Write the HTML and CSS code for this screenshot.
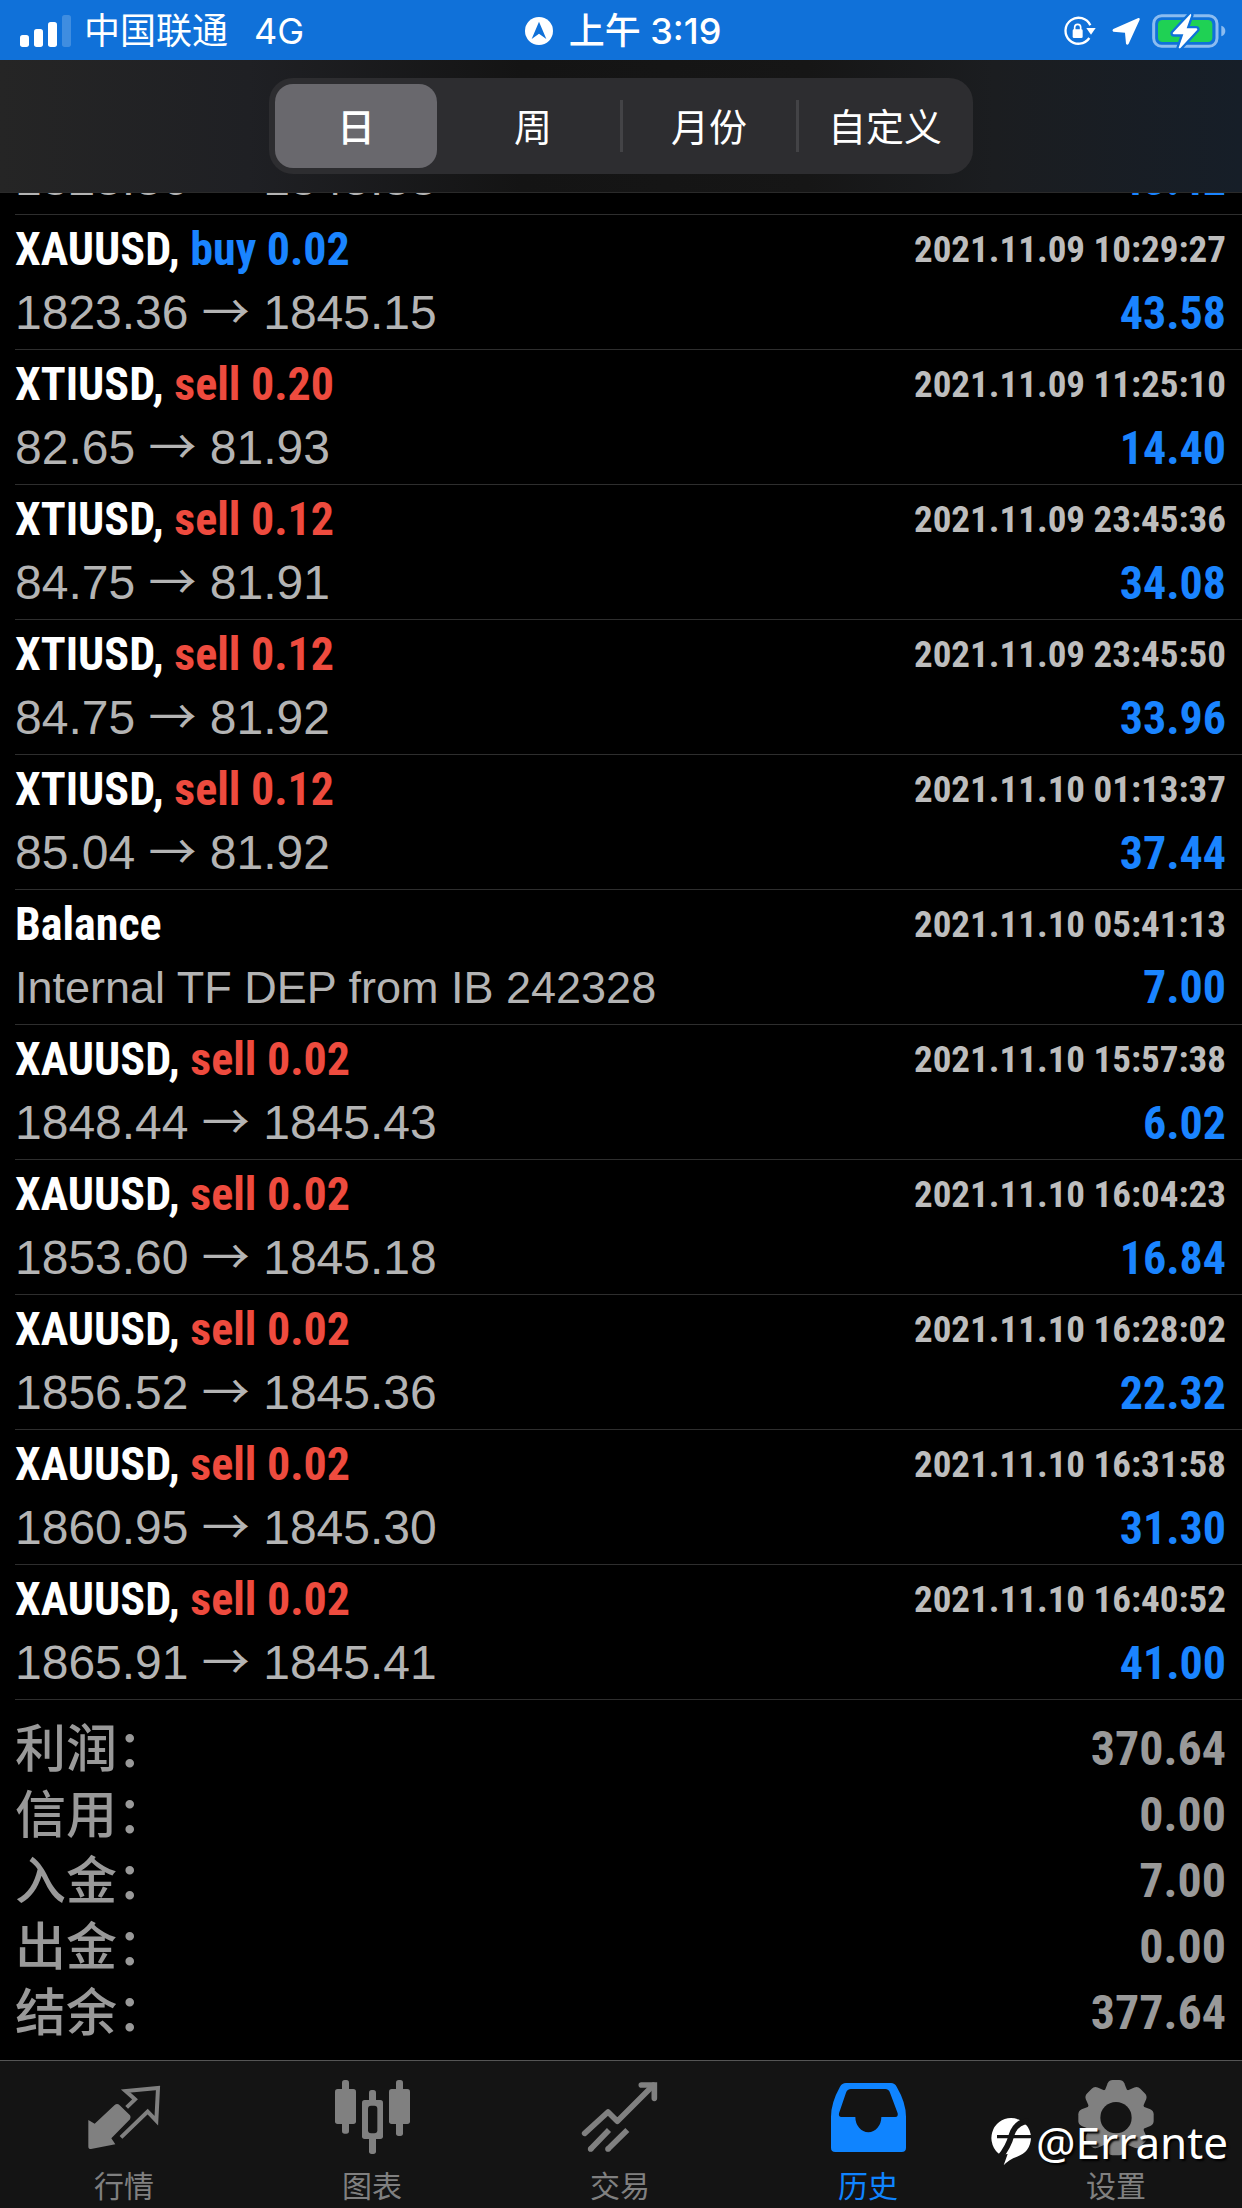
FILE: index.html
```
<!DOCTYPE html>
<html lang="zh-CN">

<head>
    <meta charset="UTF-8">
    <meta name="viewport" content="width=device-width, initial-scale=1.0">
    <link rel="stylesheet" href="styles.css">
    <title>历史</title>
</head>
<body>

<header>
    <div class="statusBar">
        <div class="carrier">
            <svg width="52" height="32" viewBox="0 0 156 96" fill="#fff">
                <rect x="0" y="60" width="27" height="36" rx="8"/>
                <rect x="42" y="42" width="27" height="54" rx="8"/>
                <rect x="84" y="21" width="27" height="75" rx="8"/>
                <rect x="126" y="0" width="27" height="96" rx="8" opacity=".2"/>
            </svg>
            <span>中国联通</span>
            <span class="network">4G</span>
        </div>
        <div class="clock">
            <svg width="28" height="28" viewBox="0 0 84 84">
                <circle cx="42" cy="42" r="42" fill="#fff"/>
                <path d="M42 14 L64 66 L42 50 L20 66 Z" fill="#1071d9"/>
            </svg>
            <span>上午 3:19</span>
        </div>
        <div class="indicators">
            <svg width="32" height="30" viewBox="0 0 96 90">
                <path d="M79 28 A39 39 0 1 0 76 66" fill="none" stroke="#fff" stroke-width="7"/>
                <path d="M67 36 H95 L81 56 Z" fill="#fff"/>
                <rect x="26" y="40" width="30" height="26" rx="4" fill="#fff"/>
                <path d="M32 42 V34 A9 9 0 0 1 50 34 V42" fill="none" stroke="#fff" stroke-width="5"/>
            </svg>
            <svg width="28" height="28" viewBox="0 0 84 84">
                <path d="M79 3 L4 36 Q-1 40 4 44 L39 47 L42 80 Q46 86 50 80 L83 8 Q84 2 79 3 Z" fill="#fff"/>
            </svg>
            <svg width="74" height="36" viewBox="0 0 222 108">
                <rect x="5" y="8" width="190" height="92" rx="24" fill="none" stroke="#8bbcf0" stroke-width="9"/>
                <rect x="18" y="21" width="163" height="66" rx="13" fill="#1fd154"/>
                <path d="M208 38 Q220 42 220 54 Q220 66 208 70 Z" fill="#8bbcf0"/>
                <path d="M116 2 L62 60 Q62 64 66 64 H94 L80 104 Q82 107 86 104 L136 50 Q136 46 132 46 H104 L118 6 Z" fill="#fff" stroke="#1071d9" stroke-width="14" stroke-linejoin="round" paint-order="stroke"/>
            </svg>
        </div>
    </div>

    <div class="toolbar">
        <div class="periods">
            <button class="selected">日</button>
            <button>周</button>
            <button>月份</button>
            <button>自定义</button>
        </div>
    </div>
</header>

<main>
    <ul class="deals">
        <li class="partial">
            <span class="price">1823.36 <i>→</i> 1845.33</span><span class="profit">43.42</span>
        </li>
        <li>
            <b>XAUUSD, <span class="buy">buy 0.02</span></b><time>2021.11.09 10:29:27</time>
            <span class="price">1823.36 <i>→</i> 1845.15</span><span class="profit">43.58</span>
        </li>
        <li>
            <b>XTIUSD, <span class="sell">sell 0.20</span></b><time>2021.11.09 11:25:10</time>
            <span class="price">82.65 <i>→</i> 81.93</span><span class="profit">14.40</span>
        </li>
        <li>
            <b>XTIUSD, <span class="sell">sell 0.12</span></b><time>2021.11.09 23:45:36</time>
            <span class="price">84.75 <i>→</i> 81.91</span><span class="profit">34.08</span>
        </li>
        <li>
            <b>XTIUSD, <span class="sell">sell 0.12</span></b><time>2021.11.09 23:45:50</time>
            <span class="price">84.75 <i>→</i> 81.92</span><span class="profit">33.96</span>
        </li>
        <li>
            <b>XTIUSD, <span class="sell">sell 0.12</span></b><time>2021.11.10 01:13:37</time>
            <span class="price">85.04 <i>→</i> 81.92</span><span class="profit">37.44</span>
        </li>
        <li>
            <b>Balance</b><time>2021.11.10 05:41:13</time>
            <span class="comment">Internal TF DEP from IB 242328</span><span class="profit">7.00</span>
        </li>
        <li>
            <b>XAUUSD, <span class="sell">sell 0.02</span></b><time>2021.11.10 15:57:38</time>
            <span class="price">1848.44 <i>→</i> 1845.43</span><span class="profit">6.02</span>
        </li>
        <li>
            <b>XAUUSD, <span class="sell">sell 0.02</span></b><time>2021.11.10 16:04:23</time>
            <span class="price">1853.60 <i>→</i> 1845.18</span><span class="profit">16.84</span>
        </li>
        <li>
            <b>XAUUSD, <span class="sell">sell 0.02</span></b><time>2021.11.10 16:28:02</time>
            <span class="price">1856.52 <i>→</i> 1845.36</span><span class="profit">22.32</span>
        </li>
        <li>
            <b>XAUUSD, <span class="sell">sell 0.02</span></b><time>2021.11.10 16:31:58</time>
            <span class="price">1860.95 <i>→</i> 1845.30</span><span class="profit">31.30</span>
        </li>
        <li>
            <b>XAUUSD, <span class="sell">sell 0.02</span></b><time>2021.11.10 16:40:52</time>
            <span class="price">1865.91 <i>→</i> 1845.41</span><span class="profit">41.00</span>
        </li>
    </ul>

    <table class="summary">
        <tbody>
            <tr><th scope="row">利润：</th><td>370.64</td></tr>
            <tr><th scope="row">信用：</th><td>0.00</td></tr>
            <tr><th scope="row">入金：</th><td>7.00</td></tr>
            <tr><th scope="row">出金：</th><td>0.00</td></tr>
            <tr><th scope="row">结余：</th><td>377.64</td></tr>
        </tbody>
    </table>
</main>

<nav class="tabs">
    <a href="#quotes">
        <svg viewBox="0 0 252 252">
            <path d="M19 132 L38 143 L98 87 Q106 81 113 88 L144 118 Q148 124 144 130 L88 187 L100 205 L27 219 Q19 219 19 212 Z" fill="currentColor"/>
            <path d="M134 94 L159 70 L131 45 L228 36 L223 134 L197 107 L117 184" fill="none" stroke="currentColor" stroke-width="12"/>
        </svg>
        行情
    </a>
    <a href="#charts">
        <svg viewBox="0 0 252 252" fill="currentColor">
            <rect x="15" y="39" width="63" height="105" rx="8"/>
            <rect x="36" y="12" width="21" height="161" rx="8"/>
            <rect x="177" y="39" width="63" height="105" rx="8"/>
            <rect x="198" y="12" width="21" height="168" rx="8"/>
            <rect x="117" y="42" width="21" height="192" rx="8"/>
            <rect x="96" y="72" width="63" height="117" rx="8"/>
            <rect x="114" y="89" width="28" height="83" rx="9" fill="#141414"/>
        </svg>
        图表
    </a>
    <a href="#trade">
        <svg viewBox="0 0 252 252" fill="none" stroke="currentColor" stroke-width="17">
            <path d="M20 172 L90 108 L118 136 L226 28" stroke-linecap="round" stroke-linejoin="round"/>
            <path d="M190 27 H229 V67" stroke-linecap="round"/>
            <path d="M38 219 L93 162 M90 219 L148 162"/>
            <path d="M38 219 h.1 M90 219 h.1" stroke-linecap="round"/>
        </svg>
        交易
    </a>
    <a href="#history" class="current">
        <svg viewBox="0 0 252 252">
            <path fill="currentColor" fill-rule="evenodd" d="M60 21 H195 Q206 21 212 32 Q240 80 240 122 V215 Q240 228 227 228 H28 Q15 228 15 215 V122 Q15 80 42 32 Q48 21 60 21 Z M75 39 Q64 39 60 50 L39 112 Q37 123 46 123 H88 A39 46 0 0 0 166 123 H208 Q217 123 215 112 L192 50 Q188 39 178 39 Z"/>
        </svg>
        历史
    </a>
    <a href="#settings">
        <svg viewBox="0 0 252 252" fill="currentColor">
            <circle cx="126" cy="125" r="90"/>
            <path id="teeth" d="M90 50 L101 22 Q106 12 116 12 H136 Q146 12 151 22 L162 50 V200 L151 228 Q146 238 136 238 H116 Q106 238 101 228 L90 200 Z"/>
            <use href="#teeth" transform="rotate(45 126 125)"/>
            <use href="#teeth" transform="rotate(90 126 125)"/>
            <use href="#teeth" transform="rotate(135 126 125)"/>
            <circle cx="126" cy="125" r="47" fill="#141414"/>
        </svg>
        设置
    </a>

    <!-- author mark, lies over the settings tab -->
    <div class="watermark">
        <svg width="40" height="48" viewBox="0 0 120 144">
            <path d="M60 0 A60 60 0 0 1 120 60 Q118 102 78 116 Q54 124 38 142 L50 108 L28 110 A60 60 0 0 1 60 0 Z" fill="#fff"/>
            <path d="M112 10 Q76 10 62 50 Q52 88 26 118" fill="none" stroke="#141414" stroke-width="17"/>
            <path d="M18 56 H120" stroke="#141414" stroke-width="10"/>
        </svg>
        <span>@Errante</span>
    </div>
</nav>

</body>
</html>
```
FILE: styles.css
```
* {
    box-sizing: border-box;
}
body {
    display: flex;
    flex-direction: column;
    height: 100vh;
    margin: 0;
    background-color: #000;
    color: #fff;
    font-family: "Liberation Sans", "Noto Sans CJK SC", sans-serif;
}

/* status bar */
.statusBar {
    display: grid;
    grid-template-columns: 1fr auto 1fr;
    align-items: center;
    height: 60px;
    padding: 2px 16px 0 20px;
    background-color: #1071d9;
    font-family: "Inter", "Noto Sans CJK SC", sans-serif;
    font-size: 36px;
    line-height: 56px;
}
.carrier, .clock, .indicators {
    display: flex;
    align-items: center;
}
.carrier {
    gap: 12px;
}
.network {
    margin-left: 14px;
}
.clock {
    gap: 16px;
    font-weight: 500;
}
.indicators {
    justify-content: flex-end;
    gap: 16px;
}
.indicators svg:last-child {
    margin-left: -4px;
}

/* period switch */
.toolbar {
    display: flex;
    justify-content: center;
    align-items: center;
    height: 133px;
    border-bottom: 1px solid #2a2a2a;
    background: linear-gradient(to right, #252525, #1f2024 20%, #141414 42%, #161616 65%, #1b1d20 80%, #161e28);
}
.periods {
    display: grid;
    grid-template-columns: repeat(4, 1fr);
    width: 704px;
    max-width: 96%;
    height: 96px;
    padding: 6px 0;
    border-radius: 24px;
    background-color: #2d2d30;
}
.periods button {
    position: relative;
    padding: 0 0 4px;
    border: none;
    border-radius: 18px;
    background: none;
    color: #fff;
    font-family: "Noto Sans CJK SC", sans-serif;
    font-size: 38px;
}
.periods .selected {
    margin: 0 8px 0 6px;
    background-color: #69686d;
    font-weight: 500;
}
.periods button:nth-child(n+3)::before {
    content: "";
    position: absolute;
    left: -1px;
    top: 16px;
    bottom: 16px;
    width: 3px;
    background-color: #434346;
}

/* the list is scrolled to its end, so older deals slide under the toolbar */
main {
    display: flex;
    flex-direction: column;
    justify-content: flex-end;
    flex: 1;
    min-height: 0;
    overflow: hidden;
}
.deals {
    list-style: none;
    margin: 0 0 0 15px;
    padding: 0;
}
.deals li {
    display: grid;
    grid-template-columns: 1fr auto;
    grid-template-rows: 63px 63px;
    align-items: baseline;
    height: 135px;
    padding: 3px 16px 0 0;
    border-bottom: 1px solid #2e2e2e;
    font-size: 48px;
    line-height: 63px;
}
.deals .partial {
    grid-template-rows: 63px;
    height: 68px;
    padding-top: 0;
}
.deals b, .deals time, .profit, .summary td {
    font-family: "Roboto Condensed", "Liberation Sans", sans-serif;
    font-weight: bold;
}
.deals b {
    font-size: 46px;
}
.deals time {
    align-self: start;
    color: #bdbdbd;
    font-size: 37px;
}
.price, .comment {
    color: #b4b4b4;
}
.comment {
    font-size: 45px;
}
.price i {
    font-family: "Noto Sans CJK SC", sans-serif;
    font-style: normal;
    line-height: 1;
}
.buy, .profit {
    color: #1a84ff;
}
.sell {
    color: #ee4b3e;
}
.profit {
    font-size: 46px;
    text-align: right;
}

.summary {
    width: 100%;
    margin: 14px 0 16px;
    border-collapse: collapse;
    color: #999;
}
.summary th, .summary td {
    height: 66px;
    line-height: 62px;
    padding: 0 15px 4px;
}
.summary th {
    text-align: left;
    font-family: "Noto Sans CJK SC", sans-serif;
    font-size: 51px;
    font-weight: 500;
}
.summary td {
    padding: 4px 16px 0;
    text-align: right;
    font-size: 48px;
}

/* tab bar */
.tabs {
    position: relative;
    display: grid;
    grid-template-columns: repeat(5, 1fr);
    height: 148px;
    padding-right: 2px;
    border-top: 1px solid #555;
    background-color: #141414;
}
.tabs a {
    display: flex;
    flex-direction: column;
    align-items: center;
    padding-top: 15px;
    color: #808080;
    font-family: "Noto Sans CJK SC", sans-serif;
    font-size: 30px;
    line-height: 48px;
    text-decoration: none;
}
.tabs a svg {
    width: 84px;
    height: 84px;
}
.tabs .current {
    color: #0f84ff;
}
.watermark {
    position: absolute;
    right: 14px;
    bottom: 36px;
    display: flex;
    align-items: center;
    gap: 5px;
    font-family: "Noto Sans", sans-serif;
    font-size: 44px;
    line-height: 60px;
    text-shadow: 2px 2px 2px #000;
}
```
